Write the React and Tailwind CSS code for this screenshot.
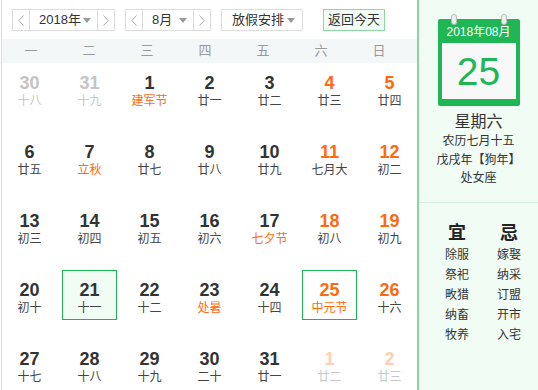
import React from "react";

const font = { fontFamily: '"Liberation Sans", Arial, "Noto Sans CJK SC", sans-serif' };

const rows = [
  [["30", "十八", "prev"], ["31", "十九", "prev"], ["1", "建军节", "hol"], ["2", "廿一"], ["3", "廿二"], ["4", "廿三"], ["5", "廿四"]],
  [["6", "廿五"], ["7", "立秋", "hol"], ["8", "廿七"], ["9", "廿八"], ["10", "廿九"], ["11", "七月大"], ["12", "初二"]],
  [["13", "初三"], ["14", "初四"], ["15", "初五"], ["16", "初六"], ["17", "七夕节", "hol"], ["18", "初八"], ["19", "初九"]],
  [["20", "初十"], ["21", "十一", "hover"], ["22", "十二"], ["23", "处暑", "hol"], ["24", "十四"], ["25", "中元节", "today"], ["26", "十六"]],
  [["27", "十七"], ["28", "十八"], ["29", "十九"], ["30", "二十"], ["31", "廿一"], ["1", "廿二", "next"], ["2", "廿三", "next"]],
];

function Chev({ dir }) {
  return (
    <svg width="6" height="11" viewBox="0 0 6 11">
      {dir === "l" ? (
        <polyline points="5.5,0.5 0.8,5.5 5.5,10.5" fill="none" stroke="#aaa" strokeWidth="1" />
      ) : (
        <polyline points="0.5,0.5 5.2,5.5 0.5,10.5" fill="none" stroke="#aaa" strokeWidth="1" />
      )}
    </svg>
  );
}

function Tri() {
  return (
    <svg width="8" height="5" viewBox="0 0 8 5">
      <polygon points="0,0 8,0 4,5" fill="#999" />
    </svg>
  );
}

function Picker({ w, label }) {
  return (
    <div className={`flex h-[22px] border border-[#dcdcdc] bg-white ${w}`}>
      <div className="flex w-[17px] items-center justify-center border-r border-[#dcdcdc]">
        <Chev dir="l" />
      </div>
      <div className="flex flex-1 items-center justify-between pl-[9px] pr-[6px] text-[13px] text-[#333]">
        <span>{label}</span>
        <Tri />
      </div>
      <div className="flex w-[17px] items-center justify-center border-l border-[#dcdcdc]">
        <Chev dir="r" />
      </div>
    </div>
  );
}

function lunarColor(kind) {
  if (kind === "prev" || kind === "next") return "text-[#c8c8c8]";
  if (kind === "hol" || kind === "today") return "text-[#ff6a0e]";
  return "text-[#444]";
}

function Cell({ num, lunar, kind, numCls }) {
  return (
    <div className="h-[69px] w-[60px]">
      <div
        className={`flex h-[50px] w-[55px] flex-col items-center pt-[10px] border ${
          kind === "hover"
            ? "border-[#1fb555] bg-[#f1fcf5]"
            : kind === "today"
            ? "border-[#1fb555] bg-white"
            : "border-transparent"
        }`}
      >
        <div className={`text-[18px] font-bold leading-[19px] ${numCls}`}>{num}</div>
        <div className={`text-[12px] leading-[16px] ${lunarColor(kind)}`}>{lunar}</div>
      </div>
    </div>
  );
}

export default function App() {
  const cells = [];
  rows.forEach((r) =>
    r.forEach((d, i) => {
      const kind = d[2];
      let c = "text-[#333]";
      if (kind === "prev") c = "text-[#c4c4c4]";
      else if (kind === "next") c = "text-[#ffcfb2]";
      else if (i >= 5 || kind === "today") c = "text-[#ff6a0e]";
      cells.push({ num: d[0], lunar: d[1], kind, numCls: c });
    })
  );
  return (
    <div className="flex h-[390px] w-[538px] overflow-hidden bg-white" style={font}>
      <div className="ml-px flex w-[416px] shrink-0 flex-col border-l border-[#dcdcdc]">
        <div className="flex h-[39px] shrink-0 items-start pl-[10px] pt-[9px]">
          <Picker w="w-[103px]" label="2018年" />
          <div className="ml-[10px]">
            <Picker w="w-[86px]" label="8月" />
          </div>
          <div className="ml-[10px] flex h-[22px] w-[82px] items-center justify-between border border-[#dcdcdc] pl-[10px] pr-[7px] text-[13px] text-[#333]">
            <span>放假安排</span>
            <Tri />
          </div>
          <div className="ml-[20px] flex h-[22px] w-[62px] items-center justify-center border border-[#8fd8a6] bg-[#f0fcf4] text-[13px] text-[#333]">
            返回今天
          </div>
        </div>
        <div className="grid h-[24px] shrink-0 grid-cols-[repeat(7,58px)] items-center bg-[#f3f7f8] text-[13px] text-[#999]">
          {["一", "二", "三", "四", "五", "六", "日"].map((w) => (
            <div key={w} className="text-center">
              {w}
            </div>
          ))}
        </div>
        <div className="grid shrink-0 grid-cols-[repeat(7,60px)]">
          {cells.map((c, i) => (
            <Cell key={i} {...c} />
          ))}
        </div>
      </div>
      <div className="flex flex-1 flex-col border-l-2 border-[#88d6a2] bg-[#f0fcf4]">
        <div className="flex shrink-0 flex-col items-center pt-[19px]">
          <div className="relative w-[82px] rounded-[2px] bg-[#1fb656] px-[4px] pb-[7px]">
            <div className="absolute left-[13px] top-[-5px] h-[11px] w-[6px] rounded-full border border-[#bbb] bg-[#eee]" />
            <div className="absolute right-[13px] top-[-5px] h-[11px] w-[6px] rounded-full border border-[#bbb] bg-[#eee]" />
            <div className="flex h-[24px] items-center justify-center pt-[2px] text-[12px] text-white">2018年08月</div>
            <div className="flex h-[56px] items-center justify-center bg-[#f8f8f8] text-[39px] leading-none text-[#1fb656]">
              25
            </div>
          </div>
          <div className="mt-[6px] text-[16px] leading-[20px] text-[#333]">星期六</div>
          <div className="text-[12px] leading-[18.5px] text-[#333]">农历七月十五</div>
          <div className="text-[12px] leading-[18.5px] text-[#333]">戊戌年【狗年】</div>
          <div className="text-[12px] leading-[18.5px] text-[#333]">处女座</div>
        </div>
        <div className="mt-[14px] h-px shrink-0 bg-[#d6efdf]" />
        <div className="flex shrink-0 gap-[12px] pl-[18px] pt-[18px]">
          {[
            ["宜", ["除服", "祭祀", "畋猎", "纳畜", "牧养"]],
            ["忌", ["嫁娶", "纳采", "订盟", "开市", "入宅"]],
          ].map(([t, items]) => (
            <div key={t} className="flex w-[40px] flex-col items-center">
              <div className="text-[18px] font-bold leading-[24px] text-[#222]">{t}</div>
              {items.map((x) => (
                <div key={x} className="text-[12px] leading-[20px] text-[#333]">
                  {x}
                </div>
              ))}
            </div>
          ))}
        </div>
      </div>
    </div>
  );
}
